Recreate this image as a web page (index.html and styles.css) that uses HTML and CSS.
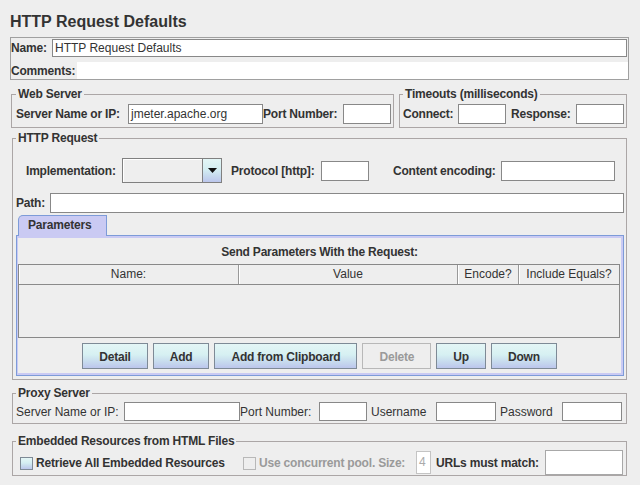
FILE: index.html
```html
<!DOCTYPE html>
<html>
<head>
<meta charset="utf-8">
<title>HTTP Request Defaults</title>
<link rel="stylesheet" href="styles.css">
</head>
<body>
<div class="title">HTTP Request Defaults</div>

<div class="namepanel">
  <div class="namerow">
    <span class="b">Name:</span>
    <div class="tf h18">HTTP Request Defaults</div>
  </div>
  <div class="comrow">
    <span class="b">Comments:</span>
    <div class="comments"></div>
  </div>
</div>

<div class="toprow">
  <fieldset class="web">
    <legend>Web Server</legend>
    <div class="row webrow">
      <span class="b">Server Name or IP:</span>
      <div class="tf">jmeter.apache.org</div>
      <span class="b">Port Number:</span>
      <div class="tf"></div>
    </div>
  </fieldset>
  <fieldset class="timeouts">
    <legend>Timeouts (milliseconds)</legend>
    <div class="row timerow">
      <span class="b">Connect:</span>
      <div class="tf"></div>
      <span class="b pl5">Response:</span>
      <div class="tf"></div>
    </div>
  </fieldset>
</div>

<fieldset class="http">
  <legend>HTTP Request</legend>
  <div class="row implrow">
    <span class="b pl10">Implementation:</span>
    <div class="combo">
      <div class="combo-val"></div>
      <div class="combo-btn">
        <svg width="9" height="5" viewBox="0 0 9 5"><polygon points="0,0 9,0 4.5,5" fill="#111"/></svg>
      </div>
    </div>
    <span class="b pl9">Protocol [http]:</span>
    <div class="tf"></div>
    <span class="b pl24">Content encoding:</span>
    <div class="tf"></div>
  </div>
  <div class="row pathrow">
    <span class="b">Path:</span>
    <div class="tf"></div>
  </div>
  <div class="tabs">
    <div class="tab b">Parameters</div>
    <div class="tabpanel">
      <div class="tabinner">
        <div class="sendlbl b">Send Parameters With the Request:</div>
        <div class="ptable">
          <div class="phead">
            <div class="hc">Name:</div>
            <div class="hc">Value</div>
            <div class="hc">Encode?</div>
            <div class="hc last">Include Equals?</div>
          </div>
        </div>
        <div class="btns">
          <div class="btn b">Detail</div>
          <div class="btn b">Add</div>
          <div class="btn b">Add from Clipboard</div>
          <div class="btn b disabled">Delete</div>
          <div class="btn b">Up</div>
          <div class="btn b">Down</div>
        </div>
      </div>
    </div>
  </div>
</fieldset>

<fieldset class="proxy">
  <legend>Proxy Server</legend>
  <div class="row proxyrow">
    <span>Server Name or IP:</span>
    <div class="tf h19"></div>
    <span>Port Number:</span>
    <div class="tf h19"></div>
    <span class="pl4">Username</span>
    <div class="tf h19"></div>
    <span class="pl4">Password</span>
    <div class="tf h19"></div>
  </div>
</fieldset>

<fieldset class="embedded">
  <legend>Embedded Resources from HTML Files</legend>
  <div class="embrow">
    <div class="cb"></div>
    <span class="b l1">Retrieve All Embedded Resources</span>
    <div class="cb dis"></div>
    <span class="b l2">Use concurrent pool. Size:</span>
    <div class="tf f4">4</div>
    <span class="b l3">URLs must match:</span>
    <div class="tf urlf"></div>
  </div>
</fieldset>
</body>
</html>
```

FILE: styles.css
```css
* { box-sizing: border-box; }
html, body { margin: 0; padding: 0; }
body {
  background: #eeeeee;
  font-family: "Liberation Sans", Arial, sans-serif;
  font-size: 12px;
  color: #333333;
  width: 640px;
  height: 485px;
  overflow: hidden;
}
.b { font-weight: bold; letter-spacing: -0.2px; }
.pl4 { padding-left: 4px; }
.pl5 { padding-left: 5px; }
.pl9 { padding-left: 9px; }
.pl10 { padding-left: 10px; }
.pl24 { padding-left: 24px; }

.title {
  padding: 12px 10px 0;
  height: 29px;
  font-size: 16px;
  font-weight: bold;
  line-height: 19px;
}

.tf {
  background: #ffffff;
  border: 1px solid #888888;
  height: 20px;
  padding: 0 2px;
  line-height: 18px;
  white-space: nowrap;
  overflow: hidden;
}
.tf.h18 { height: 18px; line-height: 16px; }
.tf.h19 { height: 19px; line-height: 17px; }

.namepanel {
  margin: 8px 0 0 10px;
  width: 619px;
  height: 43px;
  border: 1px solid #a0a0a0;
}
.namerow {
  display: grid;
  grid-template-columns: 41px 1fr;
  align-items: center;
  margin: 1px 1px 0 0;
  height: 18px;
}
.comrow {
  display: grid;
  grid-template-columns: 66px 1fr;
  align-items: center;
  margin-top: 5px;
  height: 17px;
}
.comrow span { padding-top: 1px; }
.comments { background: #ffffff; height: 17px; }

fieldset {
  margin: 0;
  min-width: 0;
  border: 1px solid #aba6a6;
}
legend {
  padding: 0 2px;
  font-weight: bold;
  letter-spacing: -0.2px;
  line-height: 14px;
}

.row { display: grid; align-items: center; }

.toprow {
  display: flex;
  gap: 5px;
  margin-top: 7px;
  padding-left: 11px;
}
.web { width: 383px; padding: 3px 2px 3px 4px; }
.webrow { grid-template-columns: 112px 135px 80px 48px; height: 20px; }
.timeouts { width: 228px; padding: 3px 2px 3px 3px; }
.timerow { grid-template-columns: 55px 48px 70px 48px; height: 20px; }

.http { margin: 3px 0 0 12px; width: 615px; padding: 13px 2px 3px 3px; }
.implrow { grid-template-columns: 106px 100px 99px 48px 132px 114px; height: 25px; }
.combo {
  display: flex;
  height: 25px;
  border: 1px solid #808080;
}
.combo-val {
  flex: 1;
  background: #eeeeee;
  border-right: 1px solid #808080;
  box-shadow: inset 1px 1px 0 #ffffff;
}
.combo-btn {
  width: 18px;
  display: flex;
  align-items: center;
  justify-content: center;
  background: linear-gradient(#e4f6f6 0%, #d4eef2 45%, #c8dcee 70%, #bcc6ec 100%);
}
.pathrow { grid-template-columns: 34px 1fr; height: 20px; margin-top: 10px; }

.tabs { margin-top: 2px; }
.tab {
  position: relative;
  z-index: 1;
  width: 89px;
  height: 21px;
  margin: 0 0 -1px 2px;
  padding-left: 9px;
  border: 1px solid #7d9bd8;
  border-bottom: 0;
  border-top-left-radius: 5px;
  background: #cacaf3;
  line-height: 18px;
}
.tabpanel {
  height: 141px;
  border: 1px solid #7d9bd8;
}
.tabinner {
  height: 100%;
  border-style: solid;
  border-color: #cacaf3;
  border-width: 2px 2px 2px 1px;
}
.sendlbl {
  margin-top: 7px;
  line-height: 14px;
  text-align: center;
}
.ptable {
  margin: 5px 1px 0 0;
  height: 74px;
  border: 1px solid #888888;
}
.phead {
  display: grid;
  grid-template-columns: 220px 219px 61px 100px;
  height: 20px;
  border-bottom: 1px solid #8a8a8a;
}
.hc {
  text-align: center;
  line-height: 19px;
  border-right: 1px solid #999999;
  box-shadow: inset 1px 0 0 #ffffff;
}
.hc.last { border-right: 0; }

.btns {
  display: flex;
  justify-content: center;
  gap: 5px;
  margin-top: 5px;
}
.btn {
  height: 26px;
  padding: 0 16px;
  border: 1px solid #7e8a96;
  background: linear-gradient(#e4f6f6 0%, #d6f0f2 45%, #c8dcee 72%, #bcc6ec 100%);
  line-height: 26px;
  white-space: nowrap;
}
.btn.disabled {
  background: #eeeeee;
  border-color: #b8b8b8;
  color: #9a9a9a;
}

.proxy { margin: 6px 0 0 12px; width: 615px; padding: 2px 2px 2px 3px; }
.proxyrow { grid-template-columns: 108px 116px 79px 48px 69px 60px 66px 60px; height: 19px; }

.embedded { margin: 10px 0 0 12px; width: 615px; padding: 1px 2px 0 3px; }
.embrow { display: flex; align-items: center; height: 26px; }
.cb {
  width: 13px;
  height: 13px;
  margin: 2px 0 0 4px;
  border: 1px solid #7e8a96;
  background: linear-gradient(#e4f6f6 0%, #d4eef2 45%, #c8dcee 70%, #bcc6ec 100%);
  flex: none;
}
.cb.dis {
  margin-left: 0;
  border-color: #b8b8b8;
  background: #eeeeee;
}
.embrow span { margin-top: 2px; }
.l1 { margin-left: 3px; width: 207px; flex: none; }
.l2 { margin-left: 3px; width: 157px; flex: none; color: #9a9a9a; }
.l3 { margin-left: 5px; width: 109px; flex: none; }
.tf.f4 { width: 15px; height: 23px; line-height: 21px; border-color: #c4c4c4; color: #aaaaaa; flex: none; }
.tf.urlf { width: 78px; height: 25px; border-color: #a8a8a8; flex: none; }
```
